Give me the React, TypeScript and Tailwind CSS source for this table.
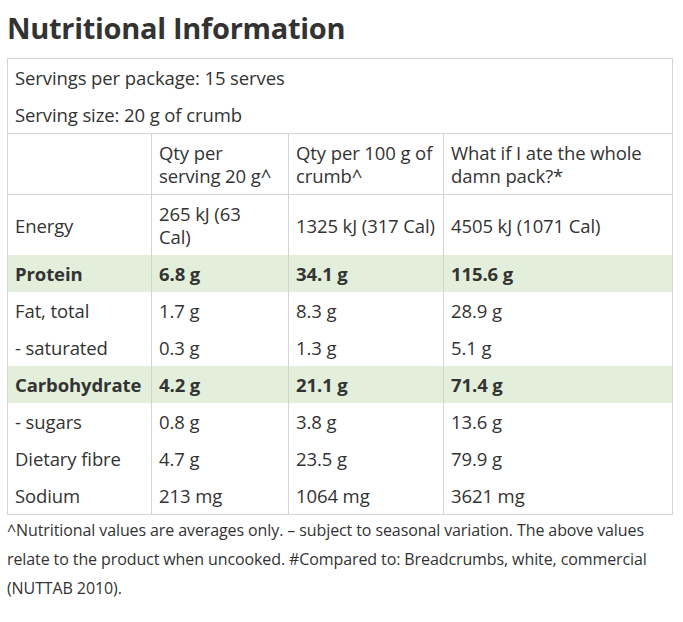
import React from 'react';

const rows = [
  { label: 'Fat, total', a: '1.7 g', b: '8.3 g', c: '28.9 g' },
  { label: '- saturated', a: '0.3 g', b: '1.3 g', c: '5.1 g' },
  { label: 'Carbohydrate', a: '4.2 g', b: '21.1 g', c: '71.4 g', hl: true },
  { label: '- sugars', a: '0.8 g', b: '3.8 g', c: '13.6 g' },
  { label: 'Dietary fibre', a: '4.7 g', b: '23.5 g', c: '79.9 g' },
  { label: 'Sodium', a: '213 mg', b: '1064 mg', c: '3621 mg' },
];

export default function App() {
  const cell = 'border-x border-[#d4d4d4] px-[7px] py-[7px] align-middle';
  return (
    <div className="min-h-screen bg-white px-[7px] pt-[10px] text-[#333333] font-['Open_Sans',sans-serif]">
      <h1 className="text-[29px] font-bold leading-[36px] tracking-[-0.3px]">Nutritional Information</h1>
      <table className="mt-[12px] w-[665px] table-fixed border-collapse border border-[#d4d4d4] text-[18.5px] leading-[23px] tracking-[-0.1px]">
        <colgroup>
          <col className="w-[144px]" />
          <col className="w-[137px]" />
          <col className="w-[155px]" />
          <col className="w-[229px]" />
        </colgroup>
        <tbody>
          <tr>
            <td colSpan={4} className="px-[7px] pt-[7px] pb-[7px]">Servings per package: 15 serves</td>
          </tr>
          <tr>
            <td colSpan={4} className="px-[7px] pt-[7px] pb-[7px]">Serving size: 20 g of crumb</td>
          </tr>
          <tr className="border-t border-[#d4d4d4]">
            <td className={cell}></td>
            <td className={cell}>Qty per serving 20 g^</td>
            <td className={cell}>Qty per 100 g of crumb^</td>
            <td className={cell}>What if I ate the whole damn pack?*</td>
          </tr>
          <tr className="border-t border-[#d4d4d4]">
            <td className={cell}>Energy</td>
            <td className={cell}>
              <div className="max-w-[112px]">265 kJ (63 Cal)</div>
            </td>
            <td className={cell}>1325 kJ (317 Cal)</td>
            <td className={cell}>4505 kJ (1071 Cal)</td>
          </tr>
          <tr className="bg-[#e3efdb] font-bold">
            <td className={cell}>Protein</td>
            <td className={cell}>6.8 g</td>
            <td className={cell}>34.1 g</td>
            <td className={cell}>115.6 g</td>
          </tr>
          {rows.map((r) => (
            <tr key={r.label} className={r.hl ? 'bg-[#e3efdb] font-bold' : ''}>
              <td className={cell}>{r.label}</td>
              <td className={cell}>{r.a}</td>
              <td className={cell}>{r.b}</td>
              <td className={cell}>{r.c}</td>
            </tr>
          ))}
        </tbody>
      </table>
      <p className="mt-[1px] max-w-[660px] text-[16px] leading-[29px] tracking-[-0.1px]">
        ^Nutritional values are averages only. – subject to seasonal variation. The above values relate to the product when uncooked. #Compared to: Breadcrumbs, white, commercial (NUTTAB 2010).
      </p>
    </div>
  );
}
